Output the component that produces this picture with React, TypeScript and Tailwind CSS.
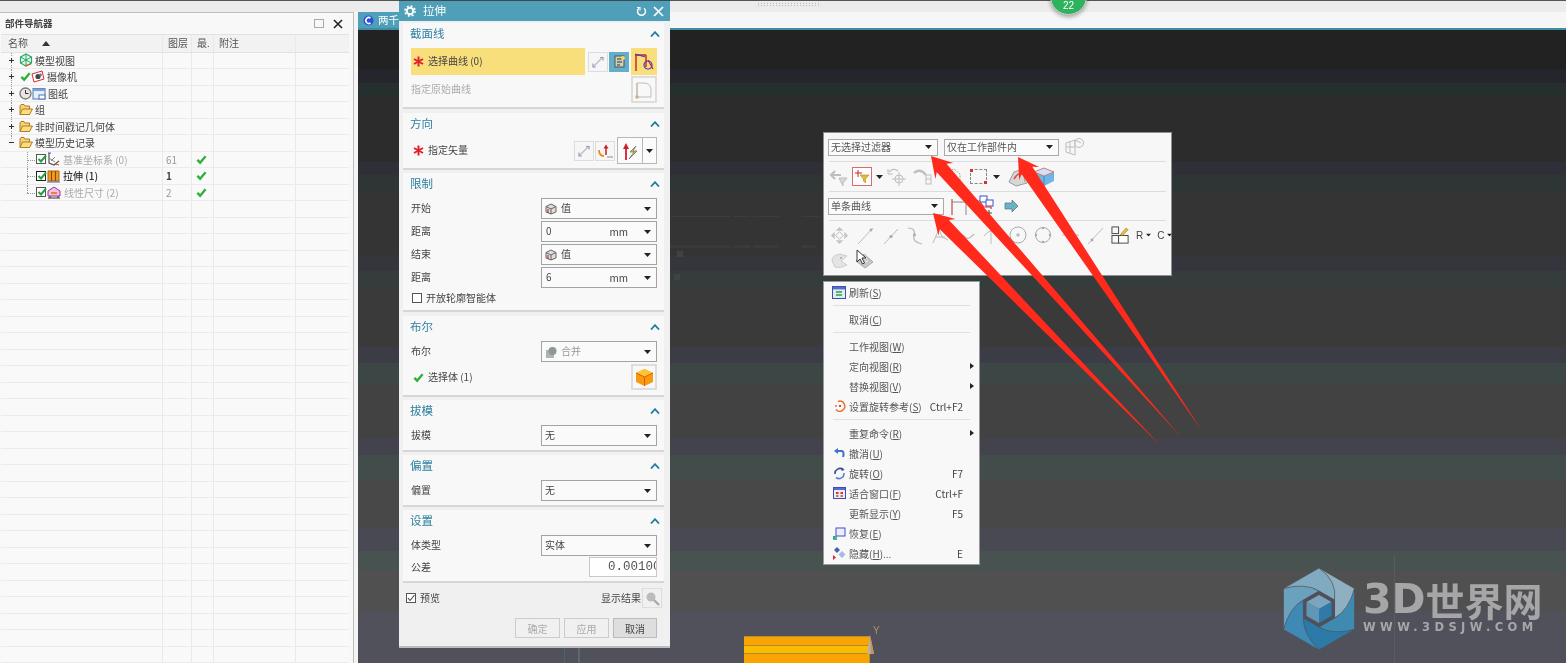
import React from "react";

const CJK = "font-['Noto_Sans_CJK_SC','Noto_Sans',sans-serif]";

const Svg = ({ w = 20, h = 20, vb = "0 0 20 20", children, className = "" }: { w?: number; h?: number; vb?: string; children: React.ReactNode; className?: string }) => (
  <svg width={w} height={h} viewBox={vb} className={"shrink-0 " + className} fill="none">{children}</svg>
);

const Check = ({ s = 12 }: { s?: number }) => (
  <Svg w={s} h={s} vb="0 0 12 12"><path d="M1.5 6.5 L4.5 9.5 L10.5 2.5" stroke="#2fb03c" strokeWidth="2.6" /></Svg>
);
const Star = () => (
  <Svg w={11} h={11} vb="0 0 11 11"><g stroke="#e0202a" strokeWidth="2"><path d="M5.5 .5V10.5" /><path d="M1 3 10 8" /><path d="M10 3 1 8" /></g></Svg>
);
const Caret = ({ className = "" }: { className?: string }) => (
  <Svg w={7} h={4} vb="0 0 7 4" className={className}><path d="M0 0H7L3.5 4Z" fill="#222" /></Svg>
);
const Folder = () => (
  <Svg w={14} h={13} vb="0 0 14 13">
    <path d="M1 3V11.5H10.5V3H6L5 1.5H2Z" fill="#f3d27a" stroke="#b27f18" />
    <path d="M1 11.5 3.5 6H13.5L10.5 11.5Z" fill="#fbdc82" stroke="#b27f18" />
  </Svg>
);
const Cb = ({ dark }: { dark?: boolean }) => (
  <span className={"relative flex w-[10px] h-[10px] shrink-0 border bg-white " + (dark ? "border-[#222]" : "border-[#555]")}>
    <svg width="10" height="10" viewBox="0 0 10 10" className="absolute left-0 -top-[1px]" fill="none"><path d="M1.5 5 4 7.5 9 1.5" stroke="#22a238" strokeWidth="2" /></svg>
  </span>
);

const treeIcons: Record<string, React.ReactNode> = {
  model: (
    <Svg w={14} h={14} vb="0 0 14 14">
      <path d="M7 1 12.5 4V10L7 13 1.5 10V4Z" stroke="#29a866" strokeWidth="1.2" fill="#e8f7ee" />
      <path d="M7 1V13M1.5 4 12.5 10M12.5 4 1.5 10" stroke="#29a866" />
      <path d="M6 13 12 11" stroke="#e3503a" strokeWidth="1.2" />
    </Svg>
  ),
  camera: (
    <Svg w={14} h={13} vb="0 0 14 13">
      <path d="M1 4 11 1 13 9 3 12Z" stroke="#dd2a2a" fill="#fff" />
      <circle cx="7" cy="6.5" r="2.6" fill="#444" />
      <circle cx="9.5" cy="5" r="1.4" fill="#5a7fae" />
    </Svg>
  ),
  clock: (
    <Svg w={13} h={13} vb="0 0 13 13">
      <circle cx="6.5" cy="6.5" r="5.5" fill="#e6e6e6" stroke="#777" strokeWidth="1.3" />
      <path d="M6.5 3V6.5H9.5" stroke="#333" />
    </Svg>
  ),
  sheet: (
    <Svg w={14} h={13} vb="0 0 14 13">
      <rect x="1" y="1.5" width="12" height="10.5" fill="#e6eef8" stroke="#4a74b8" />
      <rect x="1" y="1.5" width="12" height="2.5" fill="#7f9fd6" />
      <rect x="7" y="8" width="6" height="4" fill="#fff" stroke="#4a74b8" />
    </Svg>
  ),
  datum: (
    <Svg w={13} h={14} vb="0 0 13 14">
      <path d="M2 1V11L7 13 12 9" stroke="#555" strokeWidth="1.2" />
      <path d="M2 6 8 10M8 5 4 9" stroke="#888" />
      <path d="M8 12 12 13" stroke="#d8402a" />
      <path d="M1 1 4 1" stroke="#4358c8" />
    </Svg>
  ),
  extrude: (
    <Svg w={13} h={14} vb="0 0 13 14">
      <path d="M1 2H12V12H1Z" fill="#f59a1c" stroke="#b06010" />
      <path d="M4.5 2V12M8.5 2V12" stroke="#7a4a10" strokeWidth="1.1" />
      <path d="M0 13H13" stroke="#3f63c4" />
    </Svg>
  ),
  dim: (
    <Svg w={14} h={13} vb="0 0 14 13">
      <path d="M1 5 7 1 13 5V10H1Z" fill="#f3c0e6" stroke="#a02c9c" />
      <path d="M1 12H13" stroke="#333" />
      <path d="M4 7H10" stroke="#d07a10" strokeWidth="1.6" />
      <path d="M3 10 V12M11 10V12" stroke="#333" />
    </Svg>
  ),
};

const Plus = ({ minus }: { minus?: boolean }) => (
  <span className="relative z-10 flex w-[7px] h-[7px] items-center justify-center bg-[#f6f6f6]">
    <span className="absolute w-[5px] h-[1px] bg-[#333]" />
    {!minus && <span className="absolute w-[1px] h-[5px] bg-[#333]" />}
  </span>
);

type TreeRow = { label: string; icons: string[]; pre?: boolean; minus?: boolean; child?: "grey" | "dark"; layer?: string; last?: boolean };
const tree: TreeRow[] = [
  { label: "模型视图", icons: ["model"] },
  { label: "摄像机", icons: ["camera"], pre: true },
  { label: "图纸", icons: ["clock", "sheet"] },
  { label: "组", icons: ["folder"] },
  { label: "非时间戳记几何体", icons: ["folder"] },
  { label: "模型历史记录", icons: ["folder"], minus: true },
  { label: "基准坐标系 (0)", icons: ["datum"], child: "grey", layer: "61" },
  { label: "拉伸 (1)", icons: ["extrude"], child: "dark", layer: "1" },
  { label: "线性尺寸 (2)", icons: ["dim"], child: "grey", layer: "2", last: true },
];

const cols = "grid grid-cols-[162px_29px_22px_82px_53px]";
const cell = "border-r border-[#e9e9e9]";

function Navigator() {
  const blanks = Array.from({ length: 28 });
  return (
    <div className={"w-[354px] shrink-0 flex flex-col bg-[#f8f8f8] border-t border-r border-[#bdbdbd] overflow-hidden " + CJK}>
      <div className="h-[22px] flex items-center justify-between pl-[5px] pr-[10px] text-[9.5px] font-bold text-[#444]">
        <span>部件导航器</span>
        <span className="flex items-center gap-[9px]">
          <span className="w-[10px] h-[9px] border border-[#aaa]" />
          <svg width="10" height="10" viewBox="0 0 10 10"><path d="M1 1 9 9M9 1 1 9" stroke="#222" strokeWidth="1.6" /></svg>
        </span>
      </div>
      <div className="ml-[1px] w-[348px]">
        <div className={cols + " h-[18.5px] bg-[#f2f2f2] border-y border-[#e2e2e2] text-[10px] text-[#555] leading-[16px]"}>
          <div className={cell + " pl-[7px] flex items-center"}>
            <span>名称</span>
            <Svg w={8} h={5} vb="0 0 8 5" className="ml-[14px]"><path d="M0 5H8L4 0Z" fill="#333" /></Svg>
          </div>
          <div className={cell + " pl-[5px]"}>图层</div>
          <div className={cell + " pl-[5px] overflow-hidden"}>最.</div>
          <div className={cell + " pl-[5px]"}>附注</div>
          <div />
        </div>
        {tree.map((r, i) => (
          <div key={r.label} className={cols + " h-[16.5px] border-b border-[#ebebeb] text-[10px] leading-[15px] bg-[#f9f9f9]"}>
            <div className={cell + " relative flex items-center"}>
              {!r.child && i < 5 && <span className="absolute left-[10px] top-0 bottom-0 border-l border-dotted border-[#999]" />}
              {i === 5 && <span className="absolute left-[10px] top-0 h-[8px] border-l border-dotted border-[#999]" />}
              {r.child ? (
                <>
                  <span className={"absolute left-[26px] top-0 border-l border-dotted border-[#999] " + (r.last ? "h-[8px]" : "bottom-0")} />
                  <span className="absolute left-[26px] top-[8px] w-[8px] border-t border-dotted border-[#999]" />
                  <span className="ml-[35px] flex items-center gap-[1px]">
                    <Cb dark={r.child === "dark"} />
                    {treeIcons[r.icons[0]]}
                  </span>
                  <span className={"ml-[3px] " + (r.child === "grey" ? "text-[#aaa]" : "text-[#333] font-medium")}>{r.label}</span>
                </>
              ) : (
                <>
                  <span className="ml-[7px]"><Plus minus={r.minus} /></span>
                  <span className="ml-[4px] flex items-center">
                    {r.pre && <span className="ml-[1px]"><Check s={11} /></span>}
                    {r.icons.map((ic, k) => <span key={k} className="flex">{ic === "folder" ? <Folder /> : treeIcons[ic]}</span>)}
                  </span>
                  <span className="ml-[2px] text-[#444]">{r.label}</span>
                </>
              )}
            </div>
            <div className={cell + " pl-[3px] text-[10px] " + (r.child === "dark" ? "text-[#444] font-bold" : r.child ? "text-[#999]" : "")}>{r.layer}</div>
            <div className={cell + " flex items-center pl-[4px]"}>{r.child && <Check s={11} />}</div>
            <div className={cell} />
            <div />
          </div>
        ))}
        {blanks.map((_, i) => (
          <div key={i} className={cols + " h-[16.5px] border-b border-[#ebebeb] bg-[#f9f9f9]"}>
            <div className={cell} /><div className={cell} /><div className={cell} /><div className={cell} /><div />
          </div>
        ))}
      </div>
    </div>
  );
}

const bands = [
  "h-[39px] bg-[#222222]", "h-[13.5px] bg-[#24252d]", "h-[13.5px] bg-[#25302e]", "h-[66px] bg-[#2c2c2c]",
  "h-[13px] bg-[#2e2f37]", "h-[16px] bg-[#2d3634]", "h-[64px] bg-[#343434]", "h-[16px] bg-[#34353d]",
  "h-[16px] bg-[#343d3b]", "h-[60px] bg-[#3a3a3a]", "h-[15.5px] bg-[#3b3c45]", "h-[20.5px] bg-[#3c4644]",
  "h-[55px] bg-[#424242]", "h-[17px] bg-[#42434c]", "h-[24px] bg-[#424c4a]", "h-[49px] bg-[#484848]",
  "h-[23px] bg-[#484953]", "h-[20px] bg-[#485250]", "h-[40px] bg-[#505050]", "h-[52px] bg-[#50515b]",
];

const Chevron = () => (
  <Svg w={10} h={6} vb="0 0 10 6"><path d="M1 5.5 5 1.2 9 5.5" stroke="#1e7d9e" strokeWidth="1.8" /></Svg>
);

function Section({ title, h, mt, children }: { title: string; h: string; mt: string; children: React.ReactNode }) {
  return (
    <section className={"mx-[4px] w-[261px] bg-[#f8f8f8] border-b-2 border-[#d6d6d6] " + h + " " + mt}>
      <div className="h-[22px] flex items-center justify-between pl-[7px] pr-[4px]">
        <span className="text-[11.5px] text-[#2f7fa0]">{title}</span>
        <Chevron />
      </div>
      <div className="pl-[8px] pr-[7px]">{children}</div>
    </section>
  );
}

function Select({ children, w = "w-[116px]", icon, unit, muted }: { children: React.ReactNode; w?: string; icon?: React.ReactNode; unit?: string; muted?: boolean }) {
  return (
    <div className={"h-[21px] flex items-center border border-[#a3a3a3] bg-[#fafafa] pl-[3px] pr-[5px] text-[10px] " + w + " " + (muted ? "text-[#999]" : "text-[#444]")}>
      {icon && <span className="mr-[4px] flex">{icon}</span>}
      <span className="flex-1 relative -top-[1px]">{children}</span>
      {unit && <span className="mr-[16px] text-[10px]">{unit}</span>}
      <Caret />
    </div>
  );
}

const ValueIcon = () => (
  <Svg w={12} h={12} vb="0 0 12 12">
    <path d="M6 1 11 3.5V9L6 11 1 9V3.5Z" fill="#ddd" stroke="#666" />
    <path d="M1 3.5 6 6 11 3.5M6 6V11" stroke="#666" />
    <path d="M3 6V10" stroke="#d82a2a" strokeWidth="1.2" />
  </Svg>
);

const Row = ({ label, children, className = "" }: { label: React.ReactNode; children: React.ReactNode; className?: string }) => (
  <div className={"flex items-center justify-between text-[10px] text-[#444] " + className}>
    <span className="relative -top-[1px]">{label}</span>
    {children}
  </div>
);

const ReverseIcon = () => (
  <span className="w-[20px] h-[20px] flex items-center justify-center border border-[#ddd] bg-[#f6f6f6]">
    <Svg w={14} h={14} vb="0 0 14 14">
      <path d="M2 12 12 2" stroke="#bbb" strokeWidth="1.3" />
      <path d="M9 2.5H12V5.5M2 8.5V12H5" stroke="#9a9ac8" strokeWidth="1.2" />
    </Svg>
  </span>
);

function Dialog() {
  return (
    <div className={"absolute left-[399px] top-0 w-[271px] h-[648px] flex flex-col bg-[#f0f0f0] border-t border-[#3a4a50] border-b-2 border-b-[#bdbdbd] " + CJK}>
      <div className="h-[20px] shrink-0 bg-[#4f9fb9] flex items-center justify-between pl-[5px] pr-[6px] text-white">
        <span className="flex items-center gap-[7px] text-[11.5px]">
          <svg width="12" height="12" viewBox="0 0 12 12" fill="none"><circle cx="6" cy="6" r="3.2" stroke="#fff" strokeWidth="2" /><circle cx="6" cy="6" r="5" stroke="#fff" strokeWidth="1.6" strokeDasharray="2 1.93" /></svg>
          拉伸
        </span>
        <span className="flex items-center gap-[6px]">
          <svg width="11" height="11" viewBox="0 0 11 11" fill="none"><path d="M3 2.2A4 4 0 1 0 8 2.2" stroke="#fff" strokeWidth="1.4" /><path d="M1 1.5H4V4.5" stroke="#fff" strokeWidth="1.1" /></svg>
          <svg width="11" height="11" viewBox="0 0 11 11"><path d="M1 1 10 10M10 1 1 10" stroke="#fff" strokeWidth="1.7" /></svg>
        </span>
      </div>

      <Section title="截面线" h="h-[86px]" mt="mt-[2px]">
        <div className="mt-[3px] h-[27px] flex items-center">
          <div className="w-[174px] h-[27px] bg-[#f8df7c] flex items-center pl-[2px] text-[10px] text-[#444]">
            <Star /><span className="ml-[4px] relative -top-[1px]">选择曲线 (0)</span>
          </div>
          <span className="ml-[3px]"><ReverseIcon /></span>
          <span className="ml-[1px] w-[20px] h-[20px] bg-[#62aecb] flex items-center justify-center">
            <Svg w={13} h={13} vb="0 0 13 13"><rect x="2" y="1" width="9" height="11" fill="#c9d2b8" stroke="#555" /><path d="M4 4H9M4 7H9M4 10H7" stroke="#333" /><circle cx="10" cy="3" r="2" fill="#f4d860" /></Svg>
          </span>
          <span className="ml-[2px] w-[26px] h-[27px] bg-[#f8df7c] flex items-center justify-center">
            <Svg w={22} h={22} vb="0 0 22 22"><path d="M2 4H13M3 4V20M13 4V16" stroke="#c8202a" strokeWidth="1.4" /><path d="M2 3 12 6" stroke="#3a3ad0" /><circle cx="15" cy="14" r="4" stroke="#3a3ad0" strokeWidth="1.2" /><path d="M15 9 20 18" stroke="#c8202a" strokeWidth="1.2" /></Svg>
          </span>
        </div>
        <div className="mt-[1px] h-[27px] flex items-center justify-between text-[10px] text-[#aaa]">
          <span className="relative -top-[1px]">指定原始曲线</span>
          <span className="w-[26px] h-[27px] border-2 border-[#ddd] bg-[#f8f8f8] flex items-center justify-center">
            <Svg w={20} h={20} vb="0 0 20 20"><path d="M3 17V3H10Q17 3 17 10V17H3" stroke="#b9c0c4" /><path d="M3 3V16" stroke="#c8b8a0" strokeWidth="1.2" /><circle cx="3" cy="17" r="1.8" fill="#c8b090" /></Svg>
          </span>
        </div>
      </Section>

      <Section title="方向" h="h-[57px]" mt="mt-[4px]">
        <div className="mt-[2px] h-[27px] flex items-center">
          <span className="ml-[2px] flex"><Star /></span>
          <span className="ml-[4px] text-[10px] text-[#444] relative -top-[1px]">指定矢量</span>
          <span className="ml-auto"><ReverseIcon /></span>
          <span className="ml-[1px] w-[20px] h-[20px] border border-[#ddd] bg-[#f6f6f6] flex items-center justify-center">
            <Svg w={16} h={16} vb="0 0 16 16"><path d="M9 12V3" stroke="#c8202a" strokeWidth="1.5" /><path d="M6.5 5.5 9 1.5 11.5 5.5Z" fill="#c8202a" /><path d="M2 7Q2 13 7 13" stroke="#e88a20" strokeWidth="1.8" /><path d="M10.5 14H11.5M12.5 14H13.5M14.5 14H15.5" stroke="#222" /></Svg>
          </span>
          <span className="ml-[2px] w-[40px] h-[27px] flex border border-[#b8b8b8] bg-[#fbfbfb]">
            <span className="w-[25px] flex items-center justify-center border-r border-[#b8b8b8]">
              <Svg w={18} h={20} vb="0 0 18 20"><path d="M5 19V6" stroke="#d0202a" strokeWidth="1.8" /><path d="M2 8 5 2 8 8Z" fill="#d0202a" /><path d="M15 5 9 11H13L8 18 16 10H12Z" fill="#e4c040" stroke="#666" strokeWidth=".7" /></Svg>
            </span>
            <span className="flex-1 flex items-center justify-center"><Caret /></span>
          </span>
        </div>
      </Section>

      <Section title="限制" h="h-[139px]" mt="mt-[3px]">
        <div className="mt-[3px] flex flex-col gap-[2px]">
          <Row label="开始"><Select icon={<ValueIcon />}>值</Select></Row>
          <Row label="距离"><Select unit="mm"><span className="ml-[1px]">0</span></Select></Row>
          <Row label="结束"><Select icon={<ValueIcon />}>值</Select></Row>
          <Row label="距离"><Select unit="mm"><span className="ml-[1px]">6</span></Select></Row>
        </div>
        <div className="mt-[2px] flex items-center gap-[4px] text-[10px] text-[#444]">
          <span className="ml-[1px] w-[10px] h-[10px] border border-[#555] bg-white" />
          开放轮廓智能体
        </div>
      </Section>

      <Section title="布尔" h="h-[81px]" mt="mt-[4px]">
        <div className="mt-[3px]">
          <Row label="布尔">
            <Select muted icon={<Svg w={12} h={12} vb="0 0 12 12"><rect x="1" y="4" width="8" height="8" fill="#aeb4b4" /><circle cx="7.5" cy="5" r="4" fill="#8f9898" /></Svg>}>合并</Select>
          </Row>
        </div>
        <div className="mt-[2px] h-[26px] flex items-center text-[10px] text-[#444]">
          <span className="ml-[2px] flex"><Check s={11} /></span>
          <span className="ml-[4px] relative -top-[1px]">选择体 (1)</span>
          <span className="ml-auto w-[26px] h-[26px] border-2 border-[#ddd] bg-[#f8f8f8] flex items-center justify-center">
            <Svg w={19} h={19} vb="0 0 19 19"><path d="M9.5 1 18 5V14L9.5 18 1 14V5Z" fill="#f79a10" /><path d="M9.5 1 18 5 9.5 9 1 5Z" fill="#fbc630" /><path d="M1 5 9.5 9 18 5M9.5 9V18" stroke="#e05a10" /></Svg>
          </span>
        </div>
      </Section>

      <Section title="拔模" h="h-[52px]" mt="mt-[3px]">
        <div className="mt-[3px]"><Row label="拔模"><Select>无</Select></Row></div>
      </Section>
      <Section title="偏置" h="h-[52px]" mt="mt-[3px]">
        <div className="mt-[3px]"><Row label="偏置"><Select>无</Select></Row></div>
      </Section>
      <Section title="设置" h="h-[73px]" mt="mt-[3px]">
        <div className="mt-[3px]"><Row label="体类型"><Select>实体</Select></Row></div>
        <div className="mt-[1px]">
          <Row label="公差">
            <div className="w-[68px] h-[20px] pl-[18px] border border-[#c8c8c8] bg-white overflow-hidden text-[12.5px] leading-[18px] text-[#555] font-['Liberation_Mono',monospace] whitespace-nowrap">0.00100</div>
          </Row>
        </div>
      </Section>

      <div className="mt-[5px] h-[20px] flex items-center pl-[7px] pr-[8px] text-[10px] text-[#444]">
        <span className="relative w-[10px] h-[10px] border border-[#555] bg-white">
          <svg width="10" height="10" viewBox="0 0 10 10" className="absolute -left-[1px] -top-[1px]" fill="none"><path d="M2 5 4 7.5 8.5 2" stroke="#444" strokeWidth="1.1" /></svg>
        </span>
        <span className="ml-[4px] relative -top-[1px]">预览</span>
        <span className="ml-auto relative -top-[1px]">显示结果</span>
        <span className="ml-[1px] w-[20px] h-[20px] border border-[#ddd] flex items-center justify-center">
          <Svg w={15} h={15} vb="0 0 15 15"><circle cx="6" cy="6" r="4.5" fill="#bbb" /><path d="M9 9 14 14" stroke="#aaa" strokeWidth="2.4" /></Svg>
        </span>
      </div>
      <div className="mt-[10px] flex justify-end gap-[4px] pr-[13px] text-[10px]">
        <span className="w-[45px] h-[20px] border border-[#ccc] flex items-center justify-center text-[#aaa]">确定</span>
        <span className="w-[45px] h-[20px] border border-[#ccc] flex items-center justify-center text-[#aaa]">应用</span>
        <span className="w-[44px] h-[20px] border border-[#bbb] bg-[#dedede] flex items-center justify-center text-[#444]">取消</span>
      </div>
    </div>
  );
}

const G = "#bdbdbd";
const DDropdown = ({ w, text }: { w: string; text: string }) => (
  <div className={"h-[17px] flex items-center justify-between border border-[#aaa] bg-[#fbfbfb] pl-[2px] pr-[5px] text-[10px] text-[#555] " + w}>
    <span className="relative -top-[1px]">{text}</span><Caret />
  </div>
);
const HSep = () => <div className="mx-[5px] h-[1px] bg-[#dcdcdc]" />;
const VSep = () => <span className="w-[1px] h-[20px] bg-[#d8d8d8]" />;

function PopupToolbar() {
  return (
    <div className={"absolute left-[823px] top-[132px] w-[349px] h-[144px] flex flex-col bg-[#f7f7f7] border border-[#8f8f8f] " + CJK}>
      <div className="h-[28px] flex items-center pl-[4px]">
        <DDropdown w="w-[110px]" text="无选择过滤器" />
        <span className="ml-[6px]"><DDropdown w="w-[115px]" text="仅在工作部件内" /></span>
        <Svg w={22} h={20} vb="0 0 22 20" className="ml-[5px]"><path d="M2 6 11 3V18L2 15ZM2 10H11M6 4V16" stroke={G} /><circle cx="15" cy="6" r="4.5" stroke={G} /><path d="M11 3 17 6" stroke={G} /></Svg>
      </div>
      <HSep />
      <div className="h-[29px] flex items-center pl-[5px]">
        <Svg w={20} h={20}><path d="M3 8H12M6 4 2 8 6 12" stroke={G} strokeWidth="2" /><path d="M10 11H18L14 16V19Z" fill="#d8d8d8" stroke={G} /></Svg>
        <span className="ml-[3px] w-[20px] h-[19px] border border-[#d86a6a] bg-white flex items-center justify-center">
          <Svg w={16} h={15} vb="0 0 16 15"><path d="M4 1V8M1 4H8" stroke="#c82828" /><path d="M6 6H15L11.5 10V14L9.5 12V10Z" fill="#e8b838" stroke="#b08820" strokeWidth=".6" /></Svg>
        </span>
        <Caret className="ml-[4px]" />
        <Svg w={20} h={20} className="ml-[4px]"><path d="M2 5A6 6 0 0 1 11 4" stroke={G} strokeWidth="1.3" /><path d="M1 2V7H6" stroke={G} /><circle cx="12" cy="12" r="4" stroke={G} /><path d="M12 5V19M5 12H19" stroke={G} /></Svg>
        <Svg w={20} h={20} className="ml-[6px]"><path d="M1 6Q5 2 10 5L13 8" stroke={G} strokeWidth="2.4" /><rect x="13" y="8" width="5" height="9" stroke={G} /><path d="M13 12H18" stroke={G} /></Svg>
        <span className="ml-[5px]"><VSep /></span>
        <Svg w={20} h={20} className="ml-[5px]"><path d="M3 5 11 2 17 7V13L10 17 3 13Z" stroke="#aaa" strokeDasharray="2 1" /><path d="M12 12V18M9 16H17" stroke="#888" /></Svg>
        <span className="ml-[7px] relative w-[17px] h-[15px] border border-dashed border-[#888]">
          <span className="absolute -left-[1px] -top-[1px] w-[3px] h-[3px] bg-[#d83030]" />
          <span className="absolute -right-[1px] -bottom-[1px] w-[3px] h-[3px] bg-[#d83030]" />
        </span>
        <Caret className="ml-[6px]" />
        <span className="ml-[4px]"><VSep /></span>
        <Svg w={22} h={20} vb="0 0 22 20" className="ml-[4px]"><path d="M1 15 6 5 15 2 21 8 19 16 8 19Z" fill="#d8d8d8" stroke="#999" /><path d="M6 12Q10 5 15 7" stroke="#e25050" strokeWidth="1.6" /><path d="M15 2 17 15" stroke="#999" /></Svg>
        <Svg w={22} h={20} vb="0 0 22 20" className="ml-[3px]"><path d="M11 1 21 5V14L11 19 1 14V5Z" fill="#6fb6e8" /><path d="M11 1 21 5 11 9 1 5Z" fill="#cfe3f2" stroke="#d86060" strokeWidth=".8" /><path d="M11 9V19" stroke="#3d8ac0" /></Svg>
      </div>
      <HSep />
      <div className="h-[28px] flex items-center pl-[4px]">
        <DDropdown w="w-[116px]" text="单条曲线" />
        <Svg w={18} h={20} vb="0 0 18 20" className="ml-[7px]"><path d="M1 3V19" stroke="#c04848" strokeWidth="1.2" /><path d="M1 6H15M15 3V19" stroke="#888" /></Svg>
        <Svg w={22} h={22} vb="0 0 22 22" className="ml-[5px]"><path d="M1 6H6" stroke="#e8a030" strokeWidth="1.6" /><rect x="6" y="1" width="7" height="6" stroke="#3a50d8" fill="#fff" /><rect x="12" y="5" width="7" height="6" stroke="#3a50d8" fill="#fff" /><path d="M6 7 10 12H17V14" stroke="#d83030" strokeWidth="1.2" /><path d="M15 15V21M12 18H18" stroke="#555" strokeWidth="1.2" /></Svg>
        <Svg w={15} h={14} vb="0 0 15 14" className="ml-[8px]"><path d="M1 4H8V1L14 7 8 13V10H1Z" fill="#66b4c4" stroke="#58707a" strokeWidth=".7" /></Svg>
      </div>
      <HSep />
      <div className="h-[28px] flex items-center pl-[6px] gap-[8px]">
        <Svg w={19} h={19}><path d="M10 1 14 5H6ZM10 19 6 15H14ZM1 10 5 6V14ZM19 10 15 14V6Z" fill="#c4c4c4" /><path d="M10 6 14 10 10 14 6 10Z" stroke="#bbb" /></Svg>
        <Svg w={17} h={19} vb="0 0 17 19"><path d="M1 18 16 2" stroke={G} /><circle cx="14" cy="4" r="1.4" fill="#aaa" /></Svg>
        <Svg w={16} h={19} vb="0 0 16 19" className="ml-[1px]"><path d="M1 18 15 3" stroke={G} /><circle cx="8" cy="10.5" r="1.6" fill="#aaa" /></Svg>
        <Svg w={16} h={19} vb="0 0 16 19"><path d="M1 2Q9 2 7 9T15 18" stroke={G} strokeWidth="1.2" /><circle cx="7.5" cy="9" r="1.4" fill="#aaa" /></Svg>
        <Svg w={18} h={19} vb="0 0 18 19"><path d="M2 17 8 3 11 11 17 14" stroke={G} /><path d="M4 11H14" stroke={G} /><circle cx="8" cy="3" r="1.4" fill="#aaa" /></Svg>
        <Svg w={17} h={19} vb="0 0 17 19" className="ml-[1px]"><path d="M1 11Q4 7 7 11T16 8" stroke={G} strokeWidth="1.3" /></Svg>
        <Svg w={17} h={19} vb="0 0 17 19"><path d="M8 18V4M1 10Q6 3 16 4" stroke={G} /></Svg>
        <Svg w={18} h={18} vb="0 0 18 18" className="ml-[1px]"><circle cx="9" cy="9" r="8" stroke="#aaa" /><path d="M7 9H11M9 7V11" stroke="#aaa" /></Svg>
        <Svg w={18} h={18} vb="0 0 18 18" className="-ml-[1px]"><circle cx="9" cy="9" r="7.5" stroke="#aaa" /><circle cx="9" cy="2" r="1.2" fill="#aaa" /><circle cx="2" cy="9" r="1.2" fill="#aaa" /><circle cx="16" cy="9" r="1.2" fill="#aaa" /><circle cx="9" cy="16" r="1.2" fill="#aaa" /></Svg>
        <Svg w={17} h={17} vb="0 0 17 17" className="ml-[2px]"><path d="M0 8H17M8 4V12" stroke={G} /></Svg>
        <Svg w={17} h={19} vb="0 0 17 19"><path d="M1 18 16 2" stroke={G} /><circle cx="5" cy="14" r="1.4" fill="#aaa" /></Svg>
        <Svg w={19} h={19} className="-ml-[1px]"><rect x="1" y="1" width="7" height="7" stroke="#444" /><rect x="1" y="10" width="7" height="8" stroke="#444" /><rect x="8" y="10" width="10" height="8" stroke="#444" fill="#fff" /><path d="M10 9 16 2 18 4 12 10Z" fill="#f0c040" stroke="#a07820" strokeWidth=".7" /></Svg>
        <span className="flex items-center gap-[2px] text-[10px] text-[#444] font-['Liberation_Sans',sans-serif] -ml-[2px]">R<Caret className="scale-75" /></span>
        <span className="flex items-center gap-[2px] text-[10px] text-[#444] font-['Liberation_Sans',sans-serif] -ml-[3px]">C<Caret className="scale-75" /></span>
      </div>
      <div className="h-[24px] flex items-center pl-[6px] gap-[6px]">
        <Svg w={19} h={18} vb="0 0 19 18"><path d="M2 9Q2 3 10 2L17 4 11 9 17 13Q10 17 5 15Z" fill="#e4e4e4" stroke="#ccc" /><circle cx="11" cy="6" r="1" fill="#aaa" /></Svg>
        <Svg w={19} h={18} vb="0 0 19 18"><path d="M1 9 9 2 18 10 10 16Z" fill="#c8c8c8" stroke="#aaa" /><path d="M6 9 12 6M8 11 13 9" stroke="#eee" /></Svg>
      </div>
      <svg width="12" height="16" viewBox="0 0 12 16" className="absolute left-[32px] top-[116px]"><path d="M1 1V13L4 10 6.5 15 8.5 14 6 9H10Z" fill="#fff" stroke="#222" strokeWidth=".9" /></svg>
    </div>
  );
}

type MenuEntry = { sep: true } | { t: string; k?: string; sc?: string; arrow?: boolean; icon?: React.ReactNode };
const menu: MenuEntry[] = [
  { t: "刷新", k: "S", icon: <Svg w={14} h={13} vb="0 0 14 13"><rect x=".5" y=".5" width="13" height="12" fill="#dfeee6" stroke="#3d4fb0" /><rect x="1" y="1" width="12" height="2.4" fill="#5a6ad0" /><path d="M4 6H10M10 9H4" stroke="#28a060" strokeWidth="1.3" /></Svg> },
  { sep: true },
  { t: "取消", k: "C" },
  { sep: true },
  { t: "工作视图", k: "W" },
  { t: "定向视图", k: "R", arrow: true },
  { t: "替换视图", k: "V", arrow: true },
  { t: "设置旋转参考", k: "S", sc: "Ctrl+F2", icon: <Svg w={12} h={12} vb="0 0 12 12"><path d="M4 1.5A5 5 0 1 1 2 9.5" stroke="#e8702a" strokeWidth="1.4" /><circle cx="6" cy="6" r="1.1" fill="#d82020" /><path d="M1 6H3" stroke="#d82020" /></Svg> },
  { sep: true },
  { t: "重复命令", k: "R", arrow: true },
  { t: "撤消", k: "U", icon: <Svg w={12} h={11} vb="0 0 12 11"><path d="M2 3H8Q10.5 4 9 9" stroke="#3f72c8" strokeWidth="2" /><path d="M0 3 4 0V6Z" fill="#3f72c8" /></Svg> },
  { t: "旋转", k: "O", sc: "F7", icon: <Svg w={13} h={13} vb="0 0 13 13"><path d="M2 7A5 5 0 0 1 10 2.5" stroke="#3a4f96" strokeWidth="1.6" /><path d="M11 6A5 5 0 0 1 3 10.5" stroke="#5a7fd0" strokeWidth="1.6" /><path d="M9 .5 11.5 3 8.5 4Z" fill="#3a4f96" /></Svg> },
  { t: "适合窗口", k: "F", sc: "Ctrl+F", icon: <Svg w={13} h={12} vb="0 0 13 12"><rect x=".5" y=".5" width="12" height="11" fill="#e8ecf8" stroke="#3d4fb0" /><rect x="1" y="1" width="11" height="2" fill="#5a6ad0" /><rect x="3" y="5" width="2.5" height="2" fill="#e03030" /><rect x="7.5" y="5" width="2.5" height="2" fill="#e03030" /><rect x="3" y="8" width="2.5" height="2" fill="#e07030" /><rect x="7.5" y="8" width="2.5" height="2" fill="#e07030" /></Svg> },
  { t: "更新显示", k: "Y", sc: "F5" },
  { t: "恢复", k: "E", icon: <Svg w={14} h={13} vb="0 0 14 13"><rect x="4" y="1" width="9" height="8" fill="#eef" stroke="#3a50c8" /><path d="M5 10H1M1 12H5M2 9V12" stroke="#20a088" strokeWidth="1.4" /></Svg> },
  { t: "隐藏", k: "H", sc: "E", icon: <Svg w={14} h={14} vb="0 0 14 14"><path d="M5 1 8 4 5 7 2 4Z" fill="#4a5fa8" /><path d="M10 5 13.5 8.5 10 12 6.5 8.5Z" fill="#a8b8e8" /><path d="M1 9 4 11.5 1 14Z" fill="#e02828" /></Svg> },
];

function ContextMenu() {
  return (
    <div className={"absolute left-[823px] top-[281px] w-[157px] h-[284px] bg-[#f8f8f8] border border-[#999] " + CJK}>
      {menu.map((m, i) =>
        "sep" in m ? (
          <div key={i} className="h-[7px] flex items-center pl-[9px] pr-[9px]"><span className="flex-1 h-[1px] bg-[#e0e0e0]" /></div>
        ) : (
          <div key={i} className="relative h-[20px] flex items-center text-[10px] text-[#555]">
            <span className="w-[25px] flex justify-end pr-[3px]">{m.icon}</span>
            <span>{m.t}(<u>{m.k}</u>){m.t === "隐藏" ? "..." : ""}</span>
            {m.sc && <span className="ml-auto mr-[16px] text-[#444]">{m.sc}</span>}
            {m.arrow && <Svg w={4} h={6} vb="0 0 4 6" className="absolute right-[5px] top-[7px]"><path d="M0 0 4 3 0 6Z" fill="#222" /></Svg>}
          </div>
        )
      )}
    </div>
  );
}

function arrowPoints(tx: number, ty: number, ex: number, ey: number) {
  const d = Math.hypot(ex - tx, ey - ty);
  const u = [(ex - tx) / d, (ey - ty) / d];
  const n = [-u[1], u[0]];
  const p = (along: number, side: number) => `${tx + u[0] * along + n[0] * side},${ty + u[1] * along + n[1] * side}`;
  return [p(0, 0), p(20, 12), p(16, 6.5), [ex, ey].join(","), p(16, -6.5), p(20, -12)].join(" ");
}

function Logo() {
  const R = 41, r = 18;
  const pt = (rad: number, i: number) => {
    const a = (-90 + 60 * i) * Math.PI / 180;
    return [rad * Math.cos(a), rad * Math.sin(a)];
  };
  const colors = ["#8fb0c0", "#3f8ab0", "#2b7aa8", "#3f8ab4", "#6aa2bd", "#7faabf"];
  return (
    <div className="absolute left-[1283px] top-[568px] flex items-start">
      <svg width="72" height="82" viewBox="-36 -41 72 82">
        {colors.map((c, i) => {
          const a = pt(R, i), b = pt(R, i + 1), ib = pt(r, i + 2), ia = pt(r, i + 1);
          const ctrl = pt(R * 0.82, i + 1.55);
          return (
            <path key={i} d={`M${a[0]} ${a[1]} L${b[0]} ${b[1]} Q${ctrl[0]} ${ctrl[1]} ${ib[0]} ${ib[1]} L${ia[0]} ${ia[1]} Q${pt(R * 0.72, i + 0.55)[0]} ${pt(R * 0.72, i + 0.55)[1]} ${a[0]} ${a[1]} Z`} fill={c} stroke="#50505a" strokeWidth="0.7" />
          );
        })}
        <path d="M0 -18 15.6 -9V9L0 18 -15.6 9V-9Z" fill="#50505a" />
        <path d="M0 -14 12.5 -7 0 0 -12.5 -7Z" fill="#7aa5bd" />
        <path d="M-12.5 -7 0 0V14L-12.5 7Z" fill="#5f97b5" />
        <path d="M12.5 -7 0 0V14L12.5 7Z" fill="#2f7aa8" />
      </svg>
      <div className="ml-[8px] mt-[11px] flex flex-col text-[#a6a6a9]">
        <div className="h-[40px] flex items-center leading-none">
          <span className="text-[41px] font-bold font-['DejaVu_Sans',sans-serif]">3D</span>
          <span className={"text-[39px] font-bold " + CJK}>世界网</span>
        </div>
        <span className="mt-[2px] text-[11.5px] font-bold leading-[12px] tracking-[4.4px] whitespace-nowrap font-['DejaVu_Sans',sans-serif]">WWW.3DSJW.COM</span>
      </div>
    </div>
  );
}

export default function App() {
  return (
    <div className="relative w-[1566px] h-[663px] overflow-hidden flex flex-col bg-[#ececec] blur-[0.3px]">
      <div className="h-[12px] shrink-0 bg-[#ececec] border-t border-[#555]" />
      <div className="flex-1 flex min-h-0">
        <Navigator />
        <div className="w-[4px] shrink-0 bg-[#f4f4f4]" />
        <div className="flex-1 flex flex-col min-w-0">
          <div className="h-[16px] shrink-0 bg-[#f6f6f6] flex">
            <div className={"w-[42px] bg-[#4f9fb9] flex items-center pl-[5px] gap-[4px] text-[10.5px] text-white overflow-hidden whitespace-nowrap " + CJK}>
              <svg width="11" height="11" viewBox="0 0 11 11" className="shrink-0"><circle cx="5.5" cy="5.5" r="5" fill="#2b50d8" /><path d="M7.5 3A3 3 0 1 0 7.5 8" stroke="#fff" strokeWidth="1.6" fill="none" /></svg>
              两千
            </div>
          </div>
          <div className="h-[2px] shrink-0 bg-[#3d8ea5]" />
          <div className="flex-1 flex flex-col overflow-hidden">
            {bands.map((b) => <div key={b} className={"shrink-0 " + b} />)}
          </div>
        </div>
      </div>

      {/* ghost lines of the dimmed model */}
      <span className="absolute left-[670px] top-[216px] w-[60px] h-[1px] bg-[#3c3c3c]" />
      <span className="absolute left-[733px] top-[216px] w-[17px] h-[1px] bg-[#3c3c3c]" />
      <span className="absolute left-[753px] top-[216px] w-[26px] h-[1px] bg-[#3c3c3c]" />
      <span className="absolute left-[802px] top-[216px] w-[17px] h-[1px] bg-[#3c3c3c]" />
      <span className="absolute left-[670px] top-[245px] w-[60px] h-[3px] bg-[#3a3a3a]" />
      <span className="absolute left-[733px] top-[245px] w-[17px] h-[3px] bg-[#3a3a3a]" />
      <span className="absolute left-[753px] top-[245px] w-[26px] h-[3px] bg-[#3a3a3a]" />
      <span className="absolute left-[802px] top-[245px] w-[14px] h-[3px] bg-[#3a3a3a]" />
      <span className="absolute left-[677px] top-[251px] w-[6px] h-[6px] bg-[#424242]" />
      <span className="absolute left-[674px] top-[274px] w-[6px] h-[6px] bg-[#424242]" />
      <span className="absolute left-[1394px] top-[555px] w-[1px] h-[108px] bg-[#5c5c5c]" />
      <span className="absolute left-[564px] top-[648px] w-[1px] h-[15px] bg-[#3d6a78]" />
      <span className="absolute left-[578px] top-[648px] w-[2px] h-[15px] bg-[#5e6a66]" />

      <div className="absolute left-[757px] top-[2px] w-[64px] h-[5px] bg-[radial-gradient(#a8a8a8_40%,transparent_45%)] bg-[length:3px_2.5px]" />

      <div className="absolute left-[1050px] -top-[22px] w-[37px] h-[37px] rounded-full bg-[#2fb25e] border border-[#cfcfcf] shadow-[0_2px_4px_rgba(0,0,0,0.35)] flex items-end justify-center pb-[3px] text-[10px] leading-[11px] text-white font-['Liberation_Sans',sans-serif]">22</div>

      <Dialog />
      <PopupToolbar />
      <ContextMenu />

      <svg width="1566" height="663" className="absolute left-0 top-0 pointer-events-none">
        <polygon points={arrowPoints(931, 156, 1181, 437)} fill="#ff2a1c" />
        <polygon points={arrowPoints(1018, 157, 1202, 431)} fill="#ff2a1c" />
        <polygon points={arrowPoints(933, 213, 1160, 445)} fill="#ff2a1c" />
      </svg>

      {/* object in the viewport */}
      <div className="absolute left-[744px] top-[636px] w-[126px] h-[27px] flex flex-col bg-[#f9a400] border-t border-[#b98c3a] border-r border-r-[#b98c3a]">
        <div className="mt-[8px] h-[9px] bg-[#fbbb00] border-y border-[#b08a30]" />
      </div>
      <svg width="8" height="20" viewBox="0 0 8 20" className="absolute left-[866px] top-[635px]"><path d="M4 0 8 19H1Z" fill="#b8b0a4" /><path d="M4 0 8 19H5Z" fill="#c8905a" /></svg>
      <span className="absolute left-[873px] top-[625px] text-[10px] leading-[12px] text-[#b58f68] font-['Liberation_Sans',sans-serif]">Y</span>

      <Logo />
    </div>
  );
}
